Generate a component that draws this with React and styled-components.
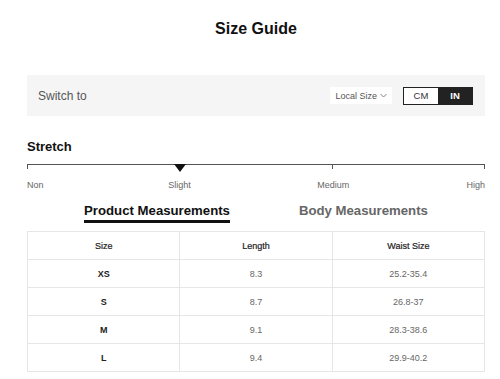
import React, { useState } from 'react'
import styled, { createGlobalStyle } from 'styled-components'

const GlobalStyle = createGlobalStyle`
  body {
    margin: 0;
    background: #fff;
    font-family: "Liberation Sans", Arial, sans-serif;
  }
`

const Page = styled.div`
  width: 458px;
  margin: 0 15px 0 27px;
`

const Title = styled.h1`
  margin: 0;
  padding-top: 19px;
  font-size: 16px;
  line-height: 20px;
  font-weight: bold;
  text-align: center;
  color: #111;
`

const SwitchBar = styled.div`
  display: flex;
  align-items: center;
  justify-content: space-between;
  height: 41px;
  margin-top: 36px;
  padding: 0 12px 0 11px;
  background: #f5f5f5;
`

const SwitchLabel = styled.span`
  font-size: 12px;
  color: #555;
`

const SwitchControls = styled.div`
  display: flex;
  align-items: center;
  gap: 11px;
`

const LocalSelect = styled.div`
  display: flex;
  align-items: center;
  gap: 3px;
  height: 17px;
  padding: 0 5px;
  background: #fff;
  font-size: 9px;
  color: #555;
`

const Toggle = styled.div`
  display: flex;
  height: 16px;
  border: 1px solid #222;
`

const ToggleOption = styled.span`
  display: flex;
  align-items: center;
  justify-content: center;
  width: 34px;
  font-size: 9.5px;
  font-weight: ${({ active }) => (active ? 'bold' : 'normal')};
  background: ${({ active }) => (active ? '#222' : '#fff')};
  color: ${({ active }) => (active ? '#fff' : '#333')};
`

const SectionTitle = styled.h2`
  margin: 23px 0 0;
  font-size: 13px;
  line-height: 16px;
  font-weight: bold;
  color: #111;
`

const Scale = styled.div`
  position: relative;
  height: 8px;
  margin-top: 9px;
  border-top: 1px solid #555;
`

const Tick = styled.span`
  position: absolute;
  top: 0;
  left: ${({ pos }) => pos}%;
  width: 1px;
  height: 4px;
  margin-left: ${({ pos }) => (pos === 100 ? '-1px' : pos === 0 ? '0' : '-0.5px')};
  background: #555;
`

const Marker = styled.span`
  position: absolute;
  top: -1px;
  left: ${({ pos }) => pos}%;
  margin-left: -6px;
  width: 0;
  height: 0;
  border-left: 6px solid transparent;
  border-right: 6px solid transparent;
  border-top: 8px solid #111;
`

const ScaleLabels = styled.div`
  display: grid;
  grid-template-columns: 1fr 1fr 1fr;
  margin-top: 6px;
  font-size: 9px;
  line-height: 12px;
  color: #666;
`

const ScaleLabel = styled.span`
  display: flex;
  justify-content: ${({ align }) => align};
`

const Tabs = styled.div`
  display: flex;
  justify-content: center;
  gap: 69px;
  margin-top: 12px;
`

const Tab = styled.button`
  padding: 0 0 1px;
  border: none;
  border-bottom: 3px solid ${({ active }) => (active ? '#111' : 'transparent')};
  background: none;
  font-family: inherit;
  font-size: 13.2px;
  line-height: 16px;
  font-weight: bold;
  color: ${({ active }) => (active ? '#111' : '#666')};
  cursor: pointer;
`

const Table = styled.table`
  width: 100%;
  margin-top: 8px;
  border-collapse: collapse;
  table-layout: fixed;
`

const Cell = styled.td`
  height: 27px;
  padding: 0;
  border: 1px solid #e6e6e6;
  text-align: center;
  font-size: 9px;
  color: ${({ strong }) => (strong ? '#222' : '#666')};
  font-weight: ${({ strong }) => (strong ? 'bold' : 'normal')};
`

const HeadCell = styled.th`
  height: 27px;
  padding: 0;
  border: 1px solid #e6e6e6;
  font-size: 9px;
  font-weight: normal;
  color: #222;
  -webkit-text-stroke: 0.2px #222;
`

const rows = [
  { size: 'XS', length: '8.3', waist: '25.2-35.4' },
  { size: 'S', length: '8.7', waist: '26.8-37' },
  { size: 'M', length: '9.1', waist: '28.3-38.6' },
  { size: 'L', length: '9.4', waist: '29.9-40.2' },
]

function Chevron() {
  return (
    <svg width="7" height="5" viewBox="0 0 7 5" fill="none" stroke="#777" strokeWidth="0.9">
      <path d="M0.5 1 L3.5 4 L6.5 1" />
    </svg>
  )
}

export default function App() {
  const [unit, setUnit] = useState('IN')
  const [tab, setTab] = useState('product')

  return (
    <Page>
      <GlobalStyle />
      <Title>Size Guide</Title>

      <SwitchBar>
        <SwitchLabel>Switch to</SwitchLabel>
        <SwitchControls>
          <LocalSelect>Local Size <Chevron /></LocalSelect>
          <Toggle>
            <ToggleOption active={unit === 'CM'} onClick={() => setUnit('CM')}>CM</ToggleOption>
            <ToggleOption active={unit === 'IN'} onClick={() => setUnit('IN')}>IN</ToggleOption>
          </Toggle>
        </SwitchControls>
      </SwitchBar>

      <SectionTitle>Stretch</SectionTitle>
      <Scale>
        <Tick pos={0} />
        <Tick pos={66.8} />
        <Tick pos={100} />
        <Marker pos={33.4} />
      </Scale>
      <ScaleLabels>
        <ScaleLabel align="space-between"><span>Non</span><span style={{ marginRight: '-11px' }}>Slight</span></ScaleLabel>
        <ScaleLabel align="flex-end"><span style={{ marginRight: '-17px' }}>Medium</span></ScaleLabel>
        <ScaleLabel align="flex-end">High</ScaleLabel>
      </ScaleLabels>

      <Tabs>
        <Tab active={tab === 'product'} onClick={() => setTab('product')}>Product Measurements</Tab>
        <Tab active={tab === 'body'} onClick={() => setTab('body')}>Body Measurements</Tab>
      </Tabs>

      <Table>
        <thead>
          <tr>
            <HeadCell>Size</HeadCell>
            <HeadCell>Length</HeadCell>
            <HeadCell>Waist Size</HeadCell>
          </tr>
        </thead>
        <tbody>
          {rows.map((row) => (
            <tr key={row.size}>
              <Cell strong>{row.size}</Cell>
              <Cell>{row.length}</Cell>
              <Cell>{row.waist}</Cell>
            </tr>
          ))}
        </tbody>
      </Table>
    </Page>
  )
}
